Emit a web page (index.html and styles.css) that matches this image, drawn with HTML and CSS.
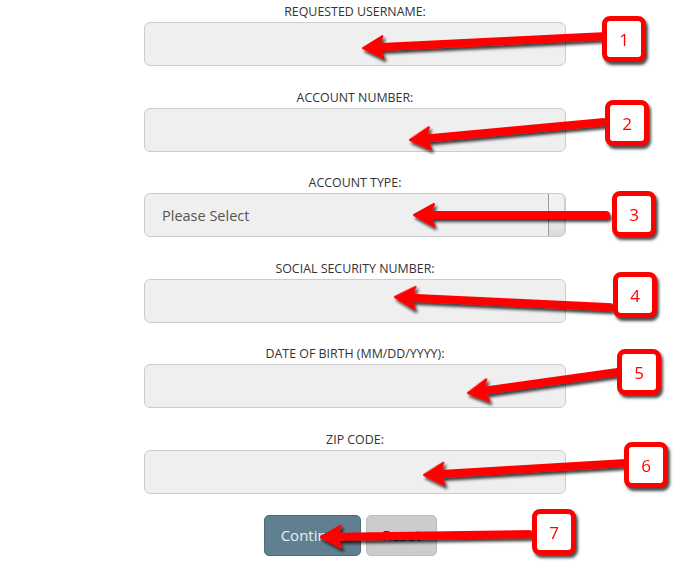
FILE: index.html
```html
<!DOCTYPE html>
<html>
<head>
<meta charset="utf-8">
<link rel="stylesheet" href="styles.css">
</head>
<body>
<div class="page">
  <form class="form">
    <div class="field">
      <label class="label">REQUESTED USERNAME:</label>
      <div class="input"></div>
    </div>
    <div class="field">
      <label class="label">ACCOUNT NUMBER:</label>
      <div class="input"></div>
    </div>
    <div class="field">
      <label class="label">ACCOUNT TYPE:</label>
      <div class="input select"><span class="placeholder">Please Select</span><span class="scroll"></span></div>
    </div>
    <div class="field">
      <label class="label">SOCIAL SECURITY NUMBER:</label>
      <div class="input"></div>
    </div>
    <div class="field">
      <label class="label">DATE OF BIRTH (MM/DD/YYYY):</label>
      <div class="input"></div>
    </div>
    <div class="field">
      <label class="label">ZIP CODE:</label>
      <div class="input"></div>
    </div>
    <div class="buttons">
      <span class="btn btn-primary">Continue</span>
      <span class="btn btn-reset">Reset</span>
    </div>
  </form>

  <svg class="arrows" width="693" height="566" viewBox="0 0 693 566">
    <defs>
      <filter id="sh" x="-20%" y="-50%" width="140%" height="200%">
        <feDropShadow dx="2" dy="3" stdDeviation="1.4" flood-color="#000" flood-opacity="0.75"/>
      </filter>
    </defs>
    <g fill="#ff0000" stroke="#ff0000" filter="url(#sh)">
      <g transform="translate(363,48) rotate(-2.8)">
        <line x1="14" y1="0" x2="244" y2="0" stroke-width="8" stroke-linecap="round"/>
        <polygon points="0,0 20,-11 16,0 20,11" stroke-width="2" stroke-linejoin="round"/>
      </g>
      <g transform="translate(410,140) rotate(-5.3)">
        <line x1="14" y1="0" x2="194" y2="0" stroke-width="8" stroke-linecap="round"/>
        <polygon points="0,0 20,-11 16,0 20,11" stroke-width="2" stroke-linejoin="round"/>
      </g>
      <g transform="translate(414,215) rotate(0)">
        <line x1="14" y1="0" x2="192" y2="0" stroke-width="8" stroke-linecap="round"/>
        <polygon points="0,0 20,-11 16,0 20,11" stroke-width="2" stroke-linejoin="round"/>
      </g>
      <g transform="translate(395,297) rotate(2.7)">
        <line x1="14" y1="0" x2="215" y2="0" stroke-width="8" stroke-linecap="round"/>
        <polygon points="0,0 20,-11 16,0 20,11" stroke-width="2" stroke-linejoin="round"/>
      </g>
      <g transform="translate(468,393) rotate(-8)">
        <line x1="14" y1="0" x2="151" y2="0" stroke-width="8" stroke-linecap="round"/>
        <polygon points="0,0 20,-11 16,0 20,11" stroke-width="2" stroke-linejoin="round"/>
      </g>
      <g transform="translate(424,475) rotate(-3.4)">
        <line x1="14" y1="0" x2="202" y2="0" stroke-width="8" stroke-linecap="round"/>
        <polygon points="0,0 20,-11 16,0 20,11" stroke-width="2" stroke-linejoin="round"/>
      </g>
      <g transform="translate(321,537) rotate(-0.8)">
        <line x1="14" y1="0" x2="208" y2="0" stroke-width="8" stroke-linecap="round"/>
        <polygon points="0,0 20,-11 16,0 20,11" stroke-width="2" stroke-linejoin="round"/>
      </g>
    </g>
  </svg>

  <div class="callout c1">1</div>
  <div class="callout c2">2</div>
  <div class="callout c3">3</div>
  <div class="callout c4">4</div>
  <div class="callout c5">5</div>
  <div class="callout c6">6</div>
  <div class="callout c7">7</div>
</div>
</body>
</html>
```

FILE: styles.css
```css
html, body {
  margin: 0;
  padding: 0;
  background: #ffffff;
}

.page {
  position: relative;
  width: 693px;
  height: 566px;
  overflow: hidden;
  font-family: "Open Sans", "Liberation Sans", sans-serif;
}

.form {
  width: 422px;
  margin: 0 0 0 144px;
  padding-top: 3px;
  display: flex;
  flex-direction: column;
}

.field {
  display: flex;
  flex-direction: column;
  margin-bottom: 22.6px;
}

.label {
  display: block;
  text-align: center;
  font-size: 12.4px;
  line-height: 18px;
  height: 18px;
  color: #333;
  margin-bottom: 1px;
}

.input {
  box-sizing: border-box;
  height: 44px;
  background: #efefef;
  border: 1px solid #cccccc;
  border-radius: 6px;
}

.select {
  display: flex;
  align-items: center;
  justify-content: space-between;
  padding-left: 17px;
  overflow: hidden;
}

.placeholder {
  font-size: 14.5px;
  color: #555;
}

.scroll {
  align-self: stretch;
  width: 15px;
  background: linear-gradient(#f2f2f2, #f0f0f0 55%, #d9d9d9);
  border-left: 1px solid #9a9a9a;
  border-right: 1px solid #d0d0d0;
  border-radius: 0 6px 6px 0;
}

.buttons {
  display: flex;
  justify-content: center;
  gap: 5px;
  margin-top: -1.6px;
  padding-right: 9px;
}

.btn {
  box-sizing: border-box;
  height: 41px;
  display: flex;
  align-items: center;
  justify-content: center;
  border-radius: 5px;
  font-size: 15px;
}

.btn-primary {
  width: 97px;
  background: #61808f;
  border: 1px solid #4e6b79;
  color: #e9eff3;
}

.btn-reset {
  width: 71px;
  background: #cccccc;
  border: 1px solid #bdbdbd;
  color: #333;
}

.arrows {
  position: absolute;
  left: 0;
  top: 0;
  pointer-events: none;
}

.callout {
  position: absolute;
  box-sizing: border-box;
  width: 44px;
  height: 46px;
  border: 5px solid #ff0000;
  border-radius: 8px;
  background: #ffffff;
  color: #ff0000;
  font-family: "Open Sans", "Liberation Sans", sans-serif;
  font-size: 17px;
  display: flex;
  align-items: center;
  justify-content: center;
  box-shadow: 2px 3px 3px rgba(0, 0, 0, 0.7);
}

.c1 { left: 602px; top: 16px; }
.c2 { left: 605px; top: 100px; }
.c3 { left: 612px; top: 191px; }
.c4 { left: 613px; top: 272px; }
.c5 { left: 617px; top: 349px; }
.c6 { left: 624px; top: 442px; }
.c7 { left: 532px; top: 509px; }
```
